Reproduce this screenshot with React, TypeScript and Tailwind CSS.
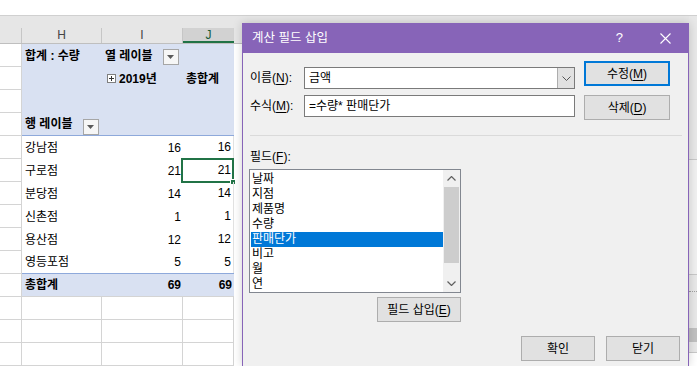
import React from 'react';

/* Small pivot filter button with a down triangle. */
function FilterButton() {
  return (
    <span className="inline-flex h-[16px] w-[16px] items-center justify-center border border-[#a6a6a6] bg-[#f6f6f6]">
      <svg width="7" height="4" viewBox="0 0 7 4">
        <path d="M0 0h7L3.5 4z" fill="#5a5a5a" />
      </svg>
    </span>
  );
}

function Mn({ c }: { c: string }) {
  return <span className="underline underline-offset-2">{c}</span>;
}

const DATA: [string, number][] = [
  ['강남점', 16],
  ['구로점', 21],
  ['분당점', 14],
  ['신촌점', 1],
  ['용산점', 12],
  ['영등포점', 5],
];

const FIELDS = ['날짜', '지점', '제품명', '수량', '판매단가', '비고', '월', '연'];

function Sheet() {
  return (
    <div className="flex flex-col">
      <div className="h-[16px] border-b border-[#d0d0d0] bg-white" />
      <div className="h-[12px] bg-[#e6e6e6]" />
      {/* column headers */}
      <div className="flex h-[16px] border-b border-[#bfbfbf] bg-[#e6e6e6] text-[12px] leading-[15px] text-[#444]">
        <div className="w-[22px] border-r border-[#c6c6c6]" />
        <div className="w-[80px] border-r border-[#c6c6c6] text-center">H</div>
        <div className="w-[81px] border-r border-[#c6c6c6] text-center">I</div>
        <div className="w-[51px] border-b-2 border-[#217346] bg-[#d2d2d2] text-center text-[#185c37]">J</div>
        <div className="flex-1" />
      </div>

      {/* pivot header rows */}
      <div className="flex h-[23px] font-bold">
        <div className="w-[22px] border-b border-r border-[#d4d4d4]" />
        <div className="flex w-[212px] items-center bg-[#d9e1f2]">
          <div className="w-[80px] pl-[3px]">합계 : 수량</div>
          <div className="flex w-[81px] items-center pl-[3px]">
            <span>열 레이블</span>
            <span className="ml-[10px]">
              <FilterButton />
            </span>
          </div>
        </div>
        <div className="flex-1" />
      </div>
      <div className="flex h-[23px] font-bold">
        <div className="w-[22px] border-b border-r border-[#d4d4d4]" />
        <div className="flex w-[212px] items-center bg-[#d9e1f2]">
          <div className="w-[80px]" />
          <div className="flex w-[81px] items-center pl-[5px]">
            <span className="mr-[3px] inline-flex h-[9px] w-[9px] items-center justify-center border border-[#7f7f7f] bg-white">
              <svg width="7" height="7" viewBox="0 0 7 7">
                <path d="M1 3.5h5M3.5 1v5" stroke="#333" strokeWidth="1" />
              </svg>
            </span>
            <span>2019년</span>
          </div>
          <div className="w-[51px] pl-[3px]">총합계</div>
        </div>
        <div className="flex-1" />
      </div>
      <div className="flex h-[23px]">
        <div className="w-[22px] border-b border-r border-[#d4d4d4]" />
        <div className="w-[212px] bg-[#d9e1f2]" />
        <div className="flex-1" />
      </div>
      <div className="flex h-[23px] font-bold">
        <div className="w-[22px] border-b border-r border-[#d4d4d4]" />
        <div className="flex w-[212px] items-center border-b border-[#8ea9db] bg-[#d9e1f2] pl-[3px]">
          <span>행 레이블</span>
          <span className="ml-[10px] mt-[3px]">
            <FilterButton />
          </span>
        </div>
        <div className="flex-1" />
      </div>

      {/* data rows */}
      {DATA.map(([name, n], idx) => (
        <div key={name} className="flex h-[23px]">
          <div className="w-[22px] border-b border-r border-[#d4d4d4]" />
          <div
            className={`flex w-[212px] items-center bg-white ${
              idx === DATA.length - 1 ? 'border-b border-[#8ea9db]' : ''
            }`}
          >
            <div className="w-[80px] pl-[3px]">{name}</div>
            <div className="w-[81px] pr-[2px] text-right">{n}</div>
            <div className="relative h-full w-[51px] border-r border-[#e2e2e2] pr-[2px] text-right leading-[22px]">
              {n}
              {name === '구로점' && (
                <span className="absolute -left-[2px] -top-[1px] bottom-[-1px] right-[-1px] border-2 border-[#217346]">
                  <span className="absolute -bottom-[4px] -right-[4px] h-[6px] w-[6px] border border-white bg-[#217346]" />
                </span>
              )}
            </div>
          </div>
          <div className="flex-1" />
        </div>
      ))}

      {/* grand total */}
      <div className="flex h-[23px] font-bold">
        <div className="w-[22px] border-b border-r border-[#d4d4d4]" />
        <div className="flex w-[212px] items-center border-b border-[#d4d4d4] bg-[#d9e1f2]">
          <div className="w-[80px] pl-[3px]">총합계</div>
          <div className="w-[81px] pr-[2px] text-right">69</div>
          <div className="w-[51px] pr-[2px] text-right">69</div>
        </div>
        <div className="flex-1" />
      </div>

      {[0, 1, 2].map((k) => (
        <div key={k} className="flex h-[23px]">
          <div className="w-[22px] border-b border-r border-[#d4d4d4]" />
          <div className="w-[80px] border-b border-r border-[#d4d4d4]" />
          <div className="w-[81px] border-b border-r border-[#d4d4d4]" />
          <div className="w-[51px] border-b border-r border-[#d4d4d4]" />
          <div className="flex-1" />
        </div>
      ))}
    </div>
  );
}

function Btn({
  children,
  w,
  primary,
}: {
  children: React.ReactNode;
  w: string;
  primary?: boolean;
}) {
  return (
    <div
      className={`flex h-[25px] items-center justify-center bg-[#e1e1e1] text-[12px] ${w} ${
        primary ? 'border-2 border-[#0078d7]' : 'border border-[#adadad]'
      }`}
    >
      {children}
    </div>
  );
}

function Dialog() {
  return (
    <div className="absolute left-[242px] top-[23px] flex h-[343px] w-[447px] flex-col border-x border-[#8764b8] bg-[#f0f0f0] text-[12px] text-black shadow-[0_0_9px_rgba(0,0,0,0.18)]">
      {/* title bar */}
      <div className="flex h-[30px] shrink-0 items-center bg-[#8764b8] pl-[9px] text-white">
        <span className="text-[12.5px]">계산 필드 삽입</span>
        <span className="ml-auto text-[13px]">?</span>
        <svg className="ml-[37px] mr-[17px]" width="11" height="11" viewBox="0 0 11 11">
          <path d="M0.5 0.5l10 10M10.5 0.5l-10 10" stroke="#fff" strokeWidth="1.1" />
        </svg>
      </div>

      {/* name / formula */}
      <div className="flex h-[82px] shrink-0 pl-[7px] pr-[18px]">
        <div className="mt-[14px] flex w-[325px] flex-col gap-[6px]">
          <div className="flex h-[22px] items-center">
            <span className="w-[54px]">
              이름(<Mn c="N" />):
            </span>
            <div className="flex h-full w-[271px] border border-[#7a7a7a] bg-white">
              <span className="flex-1 pl-[4px] leading-[20px]">금액</span>
              <span className="flex w-[17px] items-center justify-center border-l border-[#adadad] bg-[#e1e1e1]">
                <svg width="9" height="5" viewBox="0 0 9 5">
                  <path d="M0.5 0.5l4 4 4-4" fill="none" stroke="#555" strokeWidth="1" />
                </svg>
              </span>
            </div>
          </div>
          <div className="flex h-[22px] items-center">
            <span className="w-[54px]">
              수식(<Mn c="M" />):
            </span>
            <div className="h-full w-[271px] border border-[#7a7a7a] bg-white pl-[4px] leading-[20px]">
              =수량* 판매단가
            </div>
          </div>
        </div>
        <div className="ml-auto mt-[8px] flex flex-col gap-[9px]">
          <Btn w="w-[86px]" primary>
            수정(<Mn c="M" />)
          </Btn>
          <Btn w="w-[86px]">
            삭제(<Mn c="D" />)
          </Btn>
        </div>
      </div>

      <div className="ml-[7px] mr-[6px] h-px shrink-0 bg-[#dadada]" />

      {/* field list */}
      <div className="ml-[7px] mt-[13px] h-[16px] leading-[16px]">
        필드(<Mn c="F" />):
      </div>
      <div className="ml-[6px] mt-[4px] flex h-[124px] w-[212px] shrink-0 border border-[#828790] bg-white">
        <div className="flex-1 overflow-hidden pl-[1px] pt-[2px]">
          {FIELDS.map((f) => (
            <div
              key={f}
              className={`h-[15px] pl-[1px] leading-[15px] ${
                f === '판매단가' ? 'bg-[#0078d7] text-white' : ''
              }`}
            >
              {f}
            </div>
          ))}
        </div>
        <div className="flex w-[17px] flex-col bg-[#f0f0f0]">
          <div className="flex h-[17px] items-center justify-center">
            <svg width="9" height="5" viewBox="0 0 9 5">
              <path d="M0.5 4.5l4-4 4 4" fill="none" stroke="#606060" strokeWidth="1.2" />
            </svg>
          </div>
          <div className="mx-[1px] h-[76px] bg-[#cdcdcd]" />
          <div className="flex-1" />
          <div className="flex h-[17px] items-center justify-center">
            <svg width="9" height="5" viewBox="0 0 9 5">
              <path d="M0.5 0.5l4 4 4-4" fill="none" stroke="#606060" strokeWidth="1.2" />
            </svg>
          </div>
        </div>
      </div>

      <div className="ml-[134px] mt-[4px]">
        <Btn w="w-[84px]">
          필드 삽입(<Mn c="E" />)
        </Btn>
      </div>

      <div className="mt-[14px] flex justify-end gap-[11px] pr-[8px]">
        <Btn w="w-[74px]">확인</Btn>
        <Btn w="w-[74px]">닫기</Btn>
      </div>
    </div>
  );
}

export default function App() {
  return (
    <div className="relative h-[366px] w-[697px] overflow-hidden bg-white font-['Liberation_Sans','Noto_Sans_CJK_KR',sans-serif] text-[12px] text-black">
      <Sheet />
      {/* part of another pane peeking out at the right edge */}
      <div className="absolute bottom-0 right-0 top-[16px] flex w-[8px] flex-col bg-[#e8e8e8]">
        <div className="h-[144px] border-b border-[#c8c8c8]" />
        <div className="h-[115px] border-b border-[#c8c8c8] bg-[#f0f0f0]" />
        <div className="mt-[16px] h-px border-t border-dotted border-[#a0a0a0]" />
        <div className="mt-[36px] h-[14px] bg-[#c0c0c0]" />
        <div className="mt-[10px] flex-1 border-t border-[#c8c8c8] bg-white" />
      </div>
      <Dialog />
    </div>
  );
}
